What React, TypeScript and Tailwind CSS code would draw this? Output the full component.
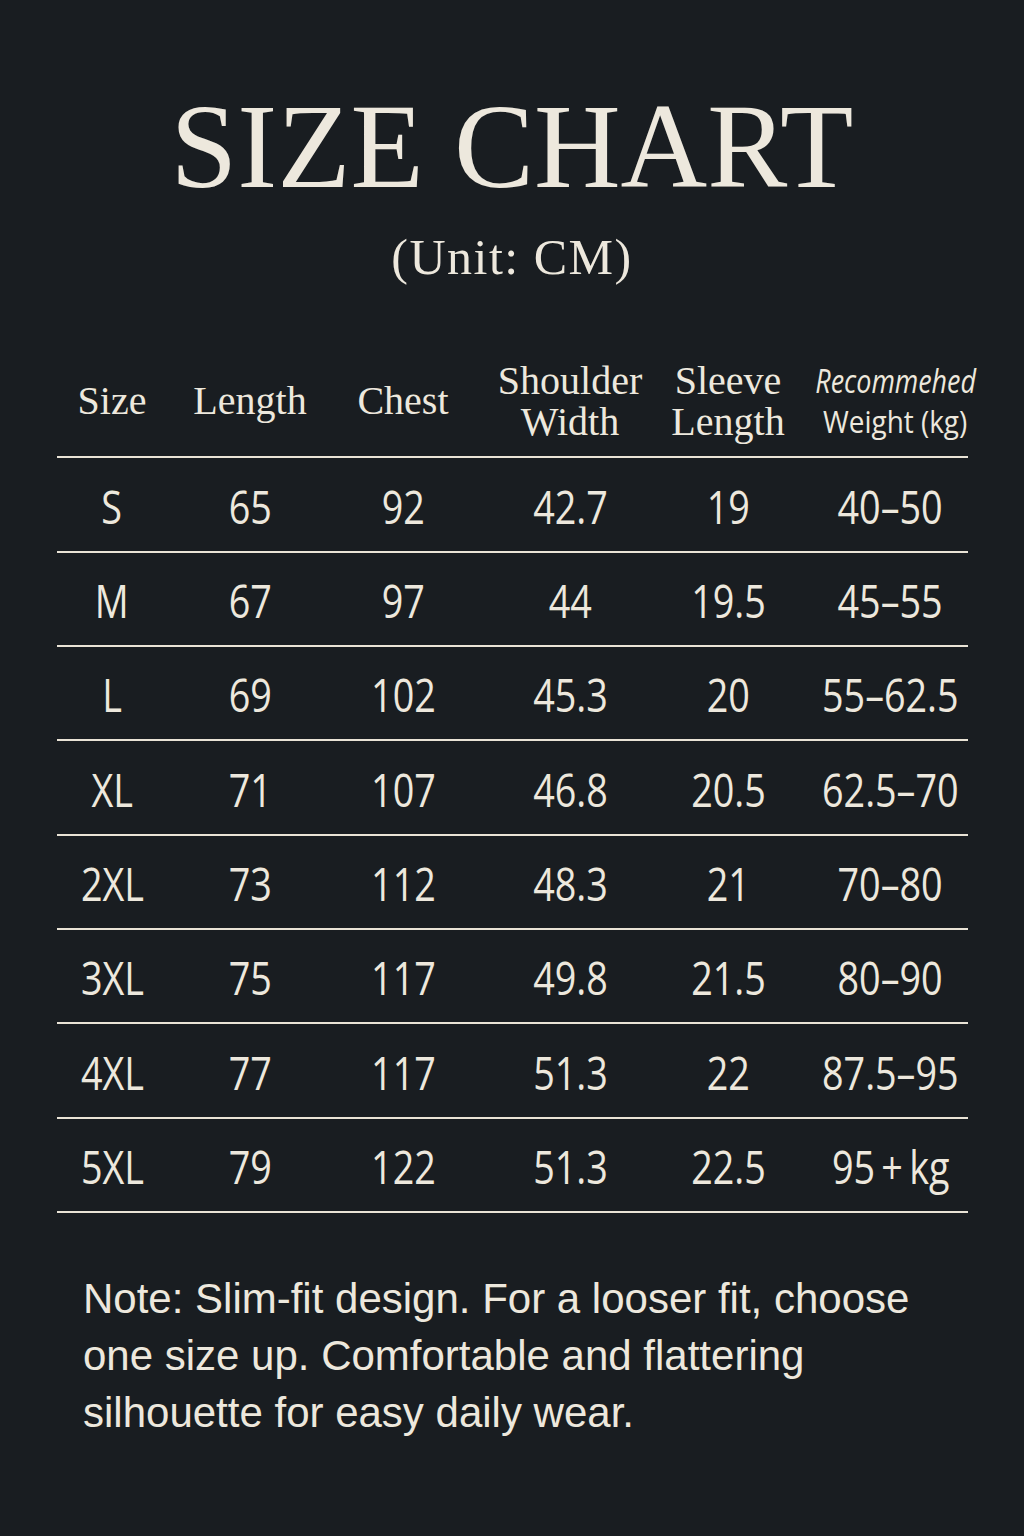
import React from 'react';

type Row = [string, string, string, string, string, string];

const rows: Row[] = [
    ['S', '65', '92', '42.7', '19', '40–50'],
    ['M', '67', '97', '44', '19.5', '45–55'],
    ['L', '69', '102', '45.3', '20', '55–62.5'],
    ['XL', '71', '107', '46.8', '20.5', '62.5–70'],
    ['2XL', '73', '112', '48.3', '21', '70–80'],
    ['3XL', '75', '117', '49.8', '21.5', '80–90'],
    ['4XL', '77', '117', '51.3', '22', '87.5–95'],
    ['5XL', '79', '122', '51.3', '22.5', '95\u2009+\u2009kg'],
];

const GRID = 'grid grid-cols-[110px_166px_140px_194px_122px_179px]';

const SerifHead: React.FC<{ lines: string[] }> = ({ lines }) => (
    <div className="flex flex-col items-center text-[40px] leading-[41px] font-['Liberation_Serif',serif]">
        {lines.map((l) => (
            <span key={l} className="whitespace-nowrap">{l}</span>
        ))}
    </div>
);

export default function App() {
    return (
        <div className="min-h-screen w-full bg-[#191d21] text-[#ede8dd]">

            {/* Title */}
            <div className="pt-[87px] text-center font-['Liberation_Serif',serif]">
                <h1 className="text-[120px] leading-none">SIZE CHART</h1>
                <p className="mt-[25px] text-[50px] leading-none tracking-[0.03em]">(Unit: CM)</p>
            </div>

            {/* Table */}
            <div className="mt-[63px] ml-[57px] w-[911px]">
                <div className={`${GRID} h-[113px] items-center border-b-2 border-[#e9e3d6]`}>
                    <SerifHead lines={['Size']} />
                    <SerifHead lines={['Length']} />
                    <SerifHead lines={['Chest']} />
                    <SerifHead lines={['Shoulder', 'Width']} />
                    <SerifHead lines={['Sleeve', 'Length']} />
                    <div className="flex flex-col items-center pl-[34px] leading-[41px] font-['Open_Sans',sans-serif]">
                        <span className="inline-block whitespace-nowrap italic text-[32px] scale-x-[0.84]">Recommehed</span>
                        <span className="inline-block whitespace-nowrap text-[31px] scale-x-[0.9]">Weight (kg)</span>
                    </div>
                </div>

                {rows.map((row, r) => (
                    <div
                        key={row[0]}
                        className={`${GRID} ${r % 3 === 0 ? 'h-[95px]' : 'h-[94px]'} items-center border-b-2 border-[#e9e3d6] font-['Open_Sans',sans-serif] font-medium text-[46px] leading-none`}
                    >
                        {row.map((cell, i) => (
                            <div key={i} className={`flex justify-center pt-[2px] ${i === 5 ? 'pl-[24px]' : ''}`}>
                                <span className="inline-block whitespace-nowrap scale-x-[0.82]">{cell}</span>
                            </div>
                        ))}
                    </div>
                ))}
            </div>

            {/* Note */}
            <div className="mt-[57px] ml-[83px] text-[42px] leading-[57px] font-['Liberation_Sans',sans-serif]">
                <p>Note: Slim-fit design. For a looser fit, choose</p>
                <p>one size up. Comfortable and flattering</p>
                <p>silhouette for easy daily wear.</p>
            </div>
        </div>
    );
}
